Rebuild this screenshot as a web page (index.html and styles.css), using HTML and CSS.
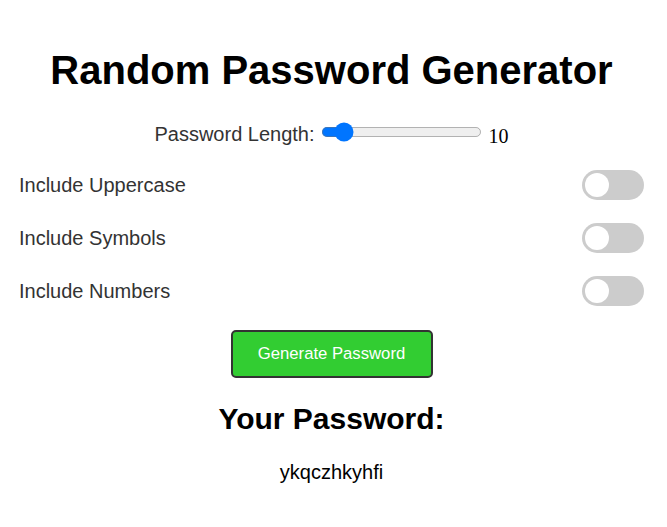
FILE: index.html
```html
<!DOCTYPE html>
<html>
<head>
<meta charset="utf-8">
<link rel="stylesheet" href="styles.css">
</head>
<body>
<div class="container">
  <h1 class="title">Random Password Generator</h1>
  <div class="length-row">
    <label class="length-label" for="len">Password Length:</label>
    <input class="slider" id="len" type="range" min="1" max="100" value="10">
    <span class="length-value">10</span>
  </div>
  <div class="option">
    <span class="option-label">Include Uppercase</span>
    <span class="toggle"><span class="knob"></span></span>
  </div>
  <div class="option">
    <span class="option-label">Include Symbols</span>
    <span class="toggle"><span class="knob"></span></span>
  </div>
  <div class="option">
    <span class="option-label">Include Numbers</span>
    <span class="toggle"><span class="knob"></span></span>
  </div>
  <div class="actions">
    <button class="generate">Generate Password</button>
  </div>
  <h2 class="result-title">Your Password:</h2>
  <p class="result">ykqczhkyhfi</p>
</div>
</body>
</html>
```
FILE: styles.css
```css
html, body {
  margin: 0;
  padding: 0;
  background: #fff;
}
body {
  font-family: "Liberation Sans", Arial, sans-serif;
  color: #333;
}
.container {
  padding: 0 23px 0 19px;
}
.title {
  margin: 0;
  padding-top: 47px;
  font-size: 40px;
  font-weight: bold;
  color: #000;
  text-align: center;
  line-height: 46px;
}
.length-row {
  margin-top: 26px;
  display: flex;
  justify-content: center;
  align-items: center;
  height: 30px;
}
.length-label {
  font-size: 20px;
  margin-right: 4px;
}
.slider {
  zoom: 1.25;
  width: 129px;
  margin: 0 5px 0 2px;
  accent-color: #0075ff;
  position: relative;
  top: -1.6px;
}
.length-value {
  font-family: "Liberation Serif", "Times New Roman", serif;
  font-size: 20px;
  color: #000;
  position: relative;
  top: 2px;
}
.option {
  display: flex;
  justify-content: space-between;
  align-items: center;
  height: 30px;
  margin-top: 21px;
}
.option + .option {
  margin-top: 23px;
}
.option-label {
  font-size: 20px;
}
.toggle {
  display: block;
  width: 62px;
  height: 30px;
  border-radius: 15px;
  background: #ccc;
  box-sizing: border-box;
  padding: 3px;
}
.knob {
  display: block;
  width: 24px;
  height: 24px;
  border-radius: 50%;
  background: #fff;
}
.actions {
  display: flex;
  justify-content: center;
  margin-top: 24px;
}
.generate {
  width: 202px;
  height: 48px;
  background: #32cd32;
  color: #fff;
  border: 2px solid #333;
  border-radius: 5px;
  font-family: "Liberation Sans", Arial, sans-serif;
  font-size: 16.7px;
  cursor: pointer;
}
.result-title {
  margin: 24px 0 0;
  font-size: 30px;
  font-weight: bold;
  color: #000;
  text-align: center;
  line-height: 34px;
}
.result {
  margin: 25px 0 0;
  font-size: 20px;
  line-height: 23px;
  color: #000;
  text-align: center;
}
```
